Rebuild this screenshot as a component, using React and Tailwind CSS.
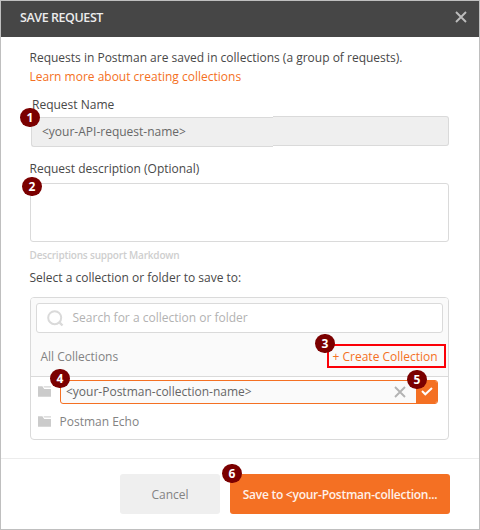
import React from "react";

function Badge({ n, className }) {
  return (
    <span
      className={`absolute z-10 flex h-[19px] w-5 items-center justify-center rounded-full bg-[#7b0000] text-[12px] leading-none font-bold tracking-normal text-white ${className}`}
    >
      {n}
    </span>
  );
}

function Cross({ className }) {
  return (
    <svg viewBox="0 0 12 12" className={className} fill="none" stroke="currentColor" strokeWidth="1.9">
      <path d="M1 1L11 11M11 1L1 11" />
    </svg>
  );
}

function Folder() {
  return (
    <svg viewBox="0 0 13 11" className="mt-[-2px] h-[11px] w-[13px] shrink-0">
      <path d="M0 0.2H4.4L6.2 3H13V10.8H0Z" fill="#cbcbcb" />
      <path d="M5.4 0.2H13V1.6H6.4Z" fill="#d4d4d4" />
    </svg>
  );
}

export default function App() {
  return (
    <div className="flex h-[530px] w-[480px] flex-col border border-[#bfbfbf] bg-white font-['Open_Sans',sans-serif] text-[12px] leading-[18px] whitespace-nowrap text-[#484848]">
      <header className="flex h-9 shrink-0 items-center justify-between bg-[#464646] pr-3 pl-[19px]">
        <h1 className="mt-[-2px] text-[12.5px] font-semibold tracking-[-0.43px] text-[#ececec]">SAVE REQUEST</h1>
        <Cross className="mt-[-4px] h-3 w-3 text-[#bcbcbc]" />
      </header>

      <main className="flex h-[422px] shrink-0 flex-col border-b border-[#ececec] pr-[30px] pl-[29px]">
        <p className="mt-[12px] -ml-[0.5px]">Requests in Postman are saved in collections (a group of requests).</p>
        <a className="mt-[1px] -ml-[0.5px] text-[#f47023]">Learn more about creating collections</a>

        <label className="mt-[10px] pl-[2px]">Request Name</label>
        <div className="relative mt-[2px] flex h-[31px] pl-px">
          <Badge n="1" className="top-[-8px] left-[-10px]" />
          <div className="mt-px flex h-[30px] w-[242px] items-center rounded-l-[3px] border border-r-0 border-[#dadada] bg-[#efefef] pl-[10px] text-[#686868]">
            {"<your-API-request-name>"}
          </div>
          <div className="h-[30px] flex-1 rounded-r-[3px] border border-l-0 border-[#dadada] bg-[#efefef]" />
        </div>

        <label className="mt-[13px] -ml-[0.5px]">Request description (Optional)</label>
        <div className="relative mt-[5px] h-[59px] shrink-0 rounded-[3px] border border-[#dadada]">
          <Badge n="2" className="top-[-7px] left-[-9px]" />
        </div>
        <p className="mt-[6px] -ml-[0.5px] text-[10px] leading-[14px] font-semibold tracking-[-0.19px] text-[#cecece]">
          Descriptions support Markdown
        </p>
        <p className="mt-[7px] -ml-[0.5px]">Select a collection or folder to save to:</p>

        <section className="mt-[10px] flex h-[143px] shrink-0 flex-col rounded-[4px] border border-[#dadada]">
          <div className="h-[79px] shrink-0 rounded-t-[3px] border-b border-[#dadada] bg-[#fafafa] px-[5px] pt-[5px]">
            <div className="flex h-[30px] items-center rounded-[3px] border border-[#dadada] bg-white pl-[10px] text-[#b2b2b2]">
              <svg viewBox="0 0 17 17" className="mr-[8.5px] h-[17px] w-[17px]" fill="none" stroke="#dadada" strokeWidth="2">
                <circle cx="7.7" cy="7.7" r="6.5" />
                <path d="M12.2 12.2L15.5 15.5" strokeWidth="2.4" />
              </svg>
              Search for a collection or folder
            </div>
            <div className="mr-[-3px] mt-[11px] flex h-6 items-center justify-between pl-[4.5px] text-[#838383]">
              <span className="mt-[2px]">All Collections</span>
              <div className="relative flex h-6 w-[119px] items-center border-2 border-[#fb0007] pt-[2px] pl-[3.5px] text-[#f47023]">
                <Badge n="3" className="top-[-12px] left-[-14px]" />
                + Create Collection
              </div>
            </div>
          </div>
          <div className="mt-[3px] flex h-6 items-center pr-[10px] pl-[7px]">
            <Folder />
            <div className="relative ml-[9px] flex h-6 flex-1 items-center rounded-[3px] border border-[#f47023] bg-[#fafafa] pl-[5px] text-[#666]">
              <Badge n="4" className="top-[-12px] left-[-11px]" />
              <span className="flex-1">{"<your-Postman-collection-name>"}</span>
              <Cross className="mr-[10px] h-3 w-3 text-[#b3b3b3]" />
              <div className="relative flex h-[22px] w-[21px] items-center justify-center rounded-r-[2px] bg-[#f47023]">
                <Badge n="5" className="top-[-11px] left-[-9px]" />
                <svg viewBox="0 0 12 9" className="mt-[-2px] h-[9px] w-3" fill="none" stroke="white" strokeWidth="2">
                  <path d="M1 4L4.3 7.3L11 1" />
                </svg>
              </div>
            </div>
          </div>
          <div className="mt-[9px] flex h-[18px] items-center pl-[7px] text-[#838383]">
            <Folder />
            <span className="ml-[8.5px]">Postman Echo</span>
          </div>
        </section>
      </main>

      <footer className="flex gap-[10px] pt-[15px] pl-[119px]">
        <button className="h-10 w-[100px] rounded-[3px] bg-[#efefef] pt-px text-[#838383]">Cancel</button>
        <button className="relative h-10 w-[220px] rounded-[3px] bg-[#f47023] pt-px font-semibold tracking-[-0.25px] text-[#fff1e9]">
          <Badge n="6" className="top-[-10px] left-[-8px]" />
          {"Save to <your-Postman-collection..."}
        </button>
      </footer>
    </div>
  );
}
